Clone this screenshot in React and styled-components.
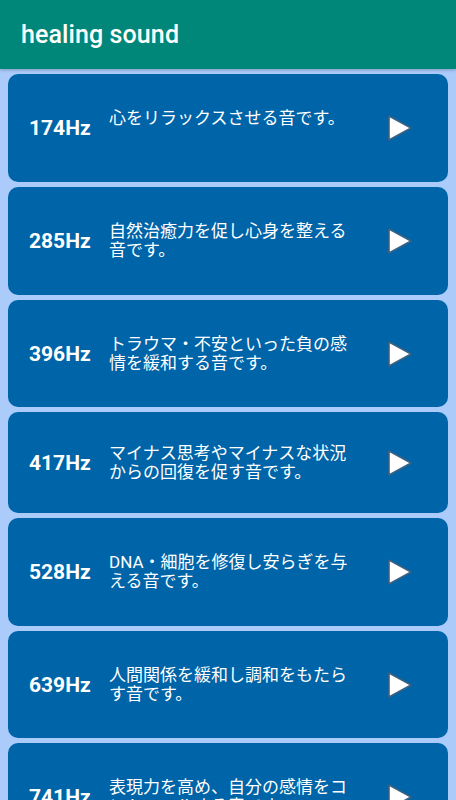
import React from "react";
import styled, { createGlobalStyle } from "styled-components";

const GlobalStyle = createGlobalStyle`
  html, body {
    margin: 0;
    padding: 0;
    background: #abcbfb;
    font-family: Roboto, "Noto Sans CJK JP", sans-serif;
  }
`;

const Page = styled.div`
  width: 456px;
  height: 800px;
  overflow: hidden;
  background: #abcbfb;
`;

const Header = styled.header`
  height: 69px;
  background: #01877a;
  display: flex;
  align-items: center;
  padding-left: 21px;
  box-shadow: 0 1px 3px rgba(0, 0, 0, 0.25);
  position: relative;
  z-index: 1;
`;

const Title = styled.h1`
  margin: 0;
  color: #fff;
  font-family: Roboto, sans-serif;
  font-weight: 500;
  font-size: 25px;
  letter-spacing: 0.1px;
`;

const List = styled.div`
  display: flex;
  flex-direction: column;
  gap: 5px;
  padding: 5px 8px 0;
`;

const Card = styled.div`
  height: ${(p) => p.$h}px;
  flex-shrink: 0;
  background: #0064a8;
  border-radius: 10px;
  display: flex;
  align-items: center;
  padding-left: 21px;
  box-sizing: border-box;
`;

const Freq = styled.div`
  width: 80px;
  color: #fff;
  font-family: Roboto, sans-serif;
  font-weight: 700;
  font-size: 21px;
`;

const Desc = styled.div`
  width: 246px;
  min-height: 38px;
  color: #fff;
  font-family: Roboto, "Noto Sans CJK JP", sans-serif;
  font-size: 17px;
  line-height: 19px;
`;

const PlayButton = styled.button`
  margin-left: 32px;
  padding: 0;
  border: none;
  background: none;
  width: 26px;
  height: 28px;
  display: flex;
  align-items: center;
  justify-content: center;
`;

const items = [
  { hz: "174Hz", text: "心をリラックスさせる音です。", h: 108 },
  { hz: "285Hz", text: "自然治癒力を促し心身を整える音です。", h: 108 },
  { hz: "396Hz", text: "トラウマ・不安といった負の感情を緩和する音です。", h: 107 },
  { hz: "417Hz", text: "マイナス思考やマイナスな状況からの回復を促す音です。", h: 101 },
  { hz: "528Hz", text: "DNA・細胞を修復し安らぎを与える音です。", h: 108 },
  { hz: "639Hz", text: "人間関係を緩和し調和をもたらす音です。", h: 107 },
  { hz: "741Hz", text: "表現力を高め、自分の感情をコントロールする音です。", h: 108 },
];

function PlayIcon() {
  return (
    <svg width="26" height="28" viewBox="0 0 26 28">
      <path
        d="M2 2 L24 14 L2 26 Z"
        fill="#fff"
        stroke="#3d6180"
        strokeWidth="1.6"
        strokeLinejoin="round"
      />
    </svg>
  );
}

export default function App() {
  return (
    <Page>
      <GlobalStyle />
      <Header>
        <Title>healing sound</Title>
      </Header>
      <List>
        {items.map((it) => (
          <Card key={it.hz} $h={it.h}>
            <Freq>{it.hz}</Freq>
            <Desc>{it.text}</Desc>
            <PlayButton>
              <PlayIcon />
            </PlayButton>
          </Card>
        ))}
      </List>
    </Page>
  );
}
